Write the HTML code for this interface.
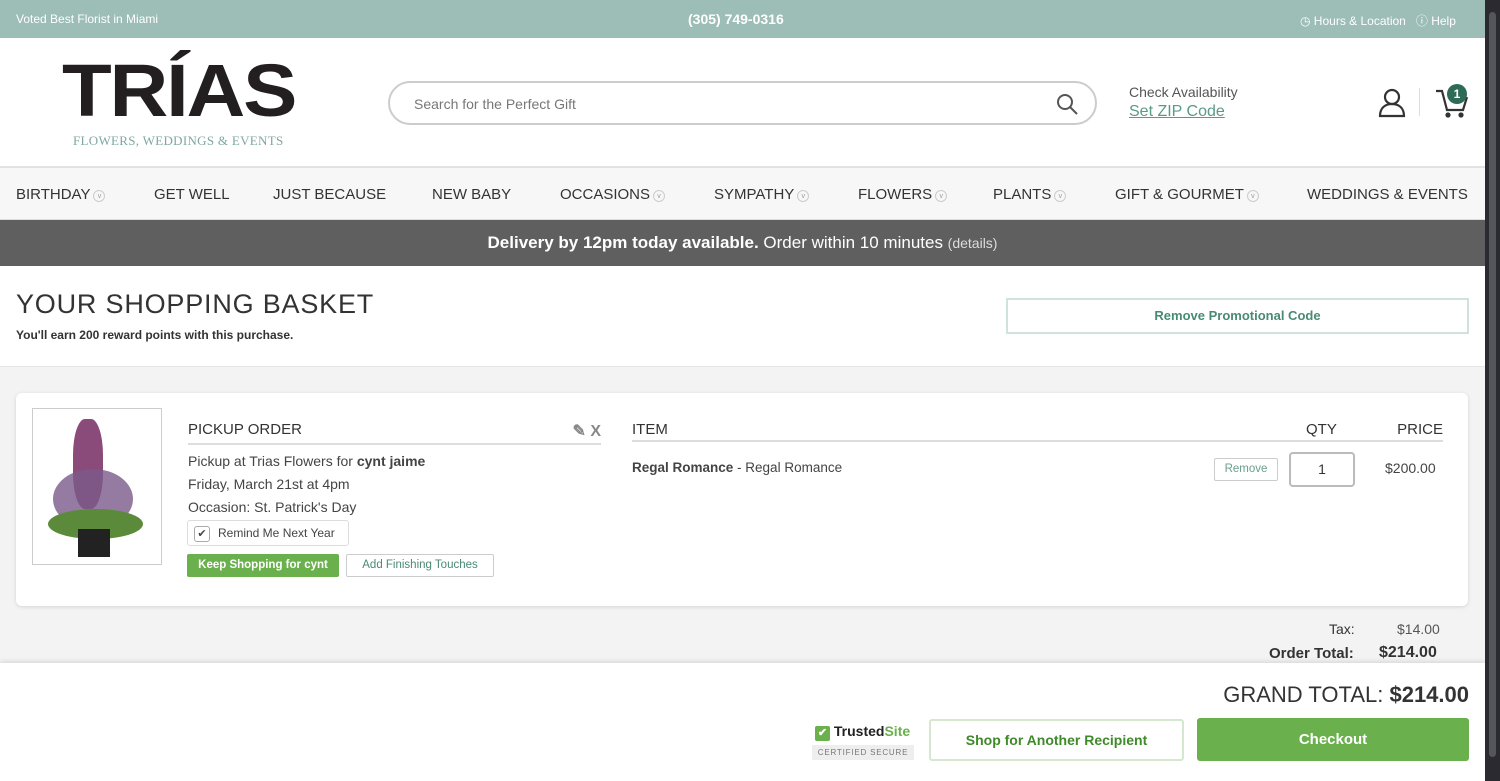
<!DOCTYPE html>
<html><head><style>
*{box-sizing:border-box;margin:0;padding:0}
body{width:1500px;height:781px;overflow:hidden;font-family:"Liberation Sans",sans-serif;background:#f3f3f3;position:relative;color:#333}
.abs{position:absolute}
.sb{position:absolute;right:0;top:0;width:15px;height:781px;background:#2a2a30}
.sb div{position:absolute;left:4px;top:12px;width:7px;height:745px;background:#55555c;border-radius:4px}
.top{left:0;top:0;width:1485px;height:38px;background:#9dbdb7;color:#fff;font-size:12px}
.hdr{left:0;top:38px;width:1485px;height:130px;background:#fff;border-bottom:2px solid #e2e2e2}
.nav{left:0;top:168px;width:1485px;height:52px;background:#f7f7f7;border-bottom:1px solid #ddd;font-size:15px;color:#333}
.nav span{position:absolute;top:18px;white-space:nowrap}
.dd{display:inline-block;width:12px;height:12px;border:1px solid #ccc;border-radius:50%;margin-left:3px;vertical-align:1px;font-size:7px;color:#999;text-align:center;line-height:11px;font-style:normal}
.del{left:0;top:220px;width:1485px;height:46px;background:#5f5f5f;color:#fff;font-size:17px;text-align:center;line-height:46px}
.bh{left:0;top:266px;width:1485px;height:101px;background:#fff;border-bottom:1px solid #e5e5e5}
.card{left:16px;top:393px;width:1452px;height:213px;background:#fff;border-radius:6px;box-shadow:0 1px 4px rgba(0,0,0,.12)}
.bot{left:0;top:663px;width:1485px;height:118px;background:#fff;box-shadow:0 -2px 4px rgba(0,0,0,.1)}
</style></head><body>
<div class="abs top">
 <div class="abs" style="left:16px;top:12px">Voted Best Florist in Miami</div>
 <div class="abs" style="left:688px;top:11px;font-size:14px;font-weight:bold">(305) 749-0316</div>
 <div class="abs" style="left:1300px;top:12px">◷ Hours &amp; Location &nbsp; ⓘ Help</div>
</div>
<div class="abs hdr">
 <div class="abs" style="left:62px;top:16px;font-family:'Liberation Sans';font-weight:900;font-size:74px;letter-spacing:-2px;color:#231f20;line-height:74px;transform:scaleX(1.1);transform-origin:left">TRÍAS</div>
 <div class="abs" style="left:73px;top:95px;font-family:'Liberation Serif',serif;font-size:13px;color:#7fa7a0;letter-spacing:.3px">FLOWERS, WEDDINGS &amp; EVENTS</div>
 <div class="abs" style="left:388px;top:43px;width:709px;height:44px;border:2px solid #ccc;border-radius:22px;font-size:14px;color:#777;padding:13px 0 0 24px">Search for the Perfect Gift
  <svg class="abs" style="right:16px;top:9px" width="24" height="24" viewBox="0 0 24 24" fill="none" stroke="#555" stroke-width="2"><circle cx="10" cy="10" r="7"/><path d="M15 15l7 7"/></svg></div>
 <div class="abs" style="left:1129px;top:46px;font-size:14px;color:#555">Check Availability</div>
 <div class="abs" style="left:1129px;top:65px;font-size:16px;color:#5a9a88;text-decoration:underline">Set ZIP Code</div>
 <svg class="abs" style="left:1378px;top:50px" width="28" height="30" viewBox="0 0 28 30" fill="none" stroke="#333" stroke-width="2.2"><circle cx="14" cy="9" r="7"/><path d="M2 28c0-8 5-12 12-12s12 4 12 12z"/></svg>
 <div class="abs" style="left:1419px;top:50px;width:1px;height:28px;background:#ddd"></div>
 <svg class="abs" style="left:1435px;top:50px" width="34" height="30" viewBox="0 0 34 30" fill="none" stroke="#333" stroke-width="2.2"><path d="M1 3h6l5 19h16l4-13"/><circle cx="13" cy="27" r="1.5" fill="#333"/><circle cx="26" cy="27" r="1.5" fill="#333"/></svg>
 <div class="abs" style="left:1447px;top:46px;width:20px;height:20px;border-radius:50%;background:#2e6b57;color:#fff;font-size:12px;font-weight:bold;text-align:center;line-height:20px">1</div>
</div>
<div class="abs nav">
 <span style="left:16px">BIRTHDAY<i class="dd">v</i></span><span style="left:154px">GET WELL</span><span style="left:273px">JUST BECAUSE</span><span style="left:432px">NEW BABY</span><span style="left:560px">OCCASIONS<i class="dd">v</i></span><span style="left:714px">SYMPATHY<i class="dd">v</i></span><span style="left:858px">FLOWERS<i class="dd">v</i></span><span style="left:993px">PLANTS<i class="dd">v</i></span><span style="left:1115px">GIFT &amp; GOURMET<i class="dd">v</i></span><span style="left:1307px">WEDDINGS &amp; EVENTS</span>
</div>
<div class="abs del"><b>Delivery by 12pm today available.</b> Order within 10 minutes <span style="font-size:14px;color:#ddd">(details)</span></div>
<div class="abs bh">
 <div class="abs" style="left:16px;top:23px;font-size:27px;color:#333;letter-spacing:.8px">YOUR SHOPPING BASKET</div>
 <div class="abs" style="left:16px;top:62px;font-size:12px;font-weight:bold;color:#333">You'll earn 200 reward points with this purchase.</div>
 <div class="abs" style="left:1006px;top:32px;width:463px;height:36px;border:2px solid #cfe3dc;font-size:13px;font-weight:bold;color:#4a8a72;text-align:center;line-height:32px">Remove Promotional Code</div>
</div>
<div class="abs card">
 <div class="abs" style="left:16px;top:15px;width:130px;height:157px;border:1px solid #ccc;background:#fff">
  <div class="abs" style="left:40px;top:10px;width:30px;height:90px;background:#8a4a7a;border-radius:40%"></div>
  <div class="abs" style="left:20px;top:60px;width:80px;height:60px;background:#7a5a8a;border-radius:50%;opacity:.8"></div>
  <div class="abs" style="left:15px;top:100px;width:95px;height:30px;background:#5a8a3a;border-radius:50%"></div>
  <div class="abs" style="left:45px;top:120px;width:32px;height:28px;background:#222"></div>
 </div>
 <div class="abs" style="left:172px;top:28px;width:413px;border-bottom:2px solid #ddd;font-size:15px;color:#333;padding-bottom:2px">PICKUP ORDER<span style="float:right;color:#888;font-weight:bold;font-size:16px">✎ X</span></div>
 <div class="abs" style="left:172px;top:57px;font-size:14px;line-height:23px;color:#444">Pickup at Trias Flowers for <b>cynt jaime</b><br>Friday, March 21st at 4pm<br>Occasion: St. Patrick's Day</div>
 <div class="abs" style="left:171px;top:127px;width:162px;height:26px;border:1px solid #ddd;border-radius:3px;font-size:12px;color:#444;padding:5px 0 0 30px">Remind Me Next Year
  <div class="abs" style="left:6px;top:5px;width:16px;height:16px;border:1px solid #aaa;border-radius:3px;font-size:11px;text-align:center;line-height:14px">✔</div></div>
 <div class="abs" style="left:171px;top:161px;width:152px;height:23px;background:#6ab04c;color:#fff;font-size:11.5px;font-weight:bold;text-align:center;line-height:23px;border-radius:2px">Keep Shopping for cynt</div>
 <div class="abs" style="left:330px;top:161px;width:148px;height:23px;border:1px solid #ccc;color:#4a8a72;font-size:11.5px;text-align:center;line-height:21px;border-radius:2px">Add Finishing Touches</div>
 <div class="abs" style="left:616px;top:28px;width:811px;border-bottom:2px solid #ddd;font-size:15px;color:#333;padding-bottom:2px">ITEM<span style="position:absolute;left:674px">QTY</span><span style="float:right">PRICE</span></div>
 <div class="abs" style="left:616px;top:67px;font-size:13.5px;color:#444"><b>Regal Romance</b> - Regal Romance</div>
 <div class="abs" style="left:1198px;top:65px;width:64px;height:23px;border:1px solid #ccc;color:#6aa08a;font-size:11.5px;text-align:center;line-height:21px;border-radius:2px">Remove</div>
 <div class="abs" style="left:1273px;top:59px;width:66px;height:35px;border:2px solid #bbb;border-radius:4px;font-size:14px;text-align:center;line-height:31px">1</div>
 <div class="abs" style="left:1369px;top:67px;font-size:14px;color:#444">$200.00</div>
</div>
<div class="abs" style="left:1329px;top:621px;font-size:14px;color:#333">Tax:</div>
<div class="abs" style="left:1397px;top:621px;font-size:14px;color:#555">$14.00</div>
<div class="abs" style="left:1269px;top:645px;font-size:15px;font-weight:bold;color:#333">Order Total:</div>
<div class="abs" style="left:1379px;top:644px;font-size:16px;font-weight:bold;color:#333">$214.00</div>
<div class="abs bot">
 <div class="abs" style="right:16px;top:19px;font-size:22px;color:#333">GRAND TOTAL: <b>$214.00</b></div>
 <div class="abs" style="left:812px;top:60px;width:102px;height:40px;">
  <div style="font-size:14px;font-weight:bold;color:#222;padding-left:3px;white-space:nowrap"><span style="display:inline-block;width:15px;height:15px;background:#6ab04c;color:#fff;font-size:11px;text-align:center;line-height:15px;border-radius:2px">✔</span> Trusted<span style="color:#6ab04c">Site</span></div>
  <div style="margin-top:4px;background:#eee;font-size:8px;color:#777;letter-spacing:.8px;text-align:center;height:15px;line-height:15px;white-space:nowrap">CERTIFIED SECURE</div>
 </div>
 <div class="abs" style="left:929px;top:56px;width:255px;height:42px;border:2px solid #d5e8cf;border-radius:3px;color:#3f8a2a;font-weight:bold;font-size:14px;text-align:center;line-height:38px">Shop for Another Recipient</div>
 <div class="abs" style="left:1197px;top:55px;width:272px;height:43px;background:#6ab04c;border-radius:3px;color:#fff;font-weight:bold;font-size:15px;text-align:center;line-height:43px">Checkout</div>
</div>
<div class="sb"><div></div></div>
</body></html>
